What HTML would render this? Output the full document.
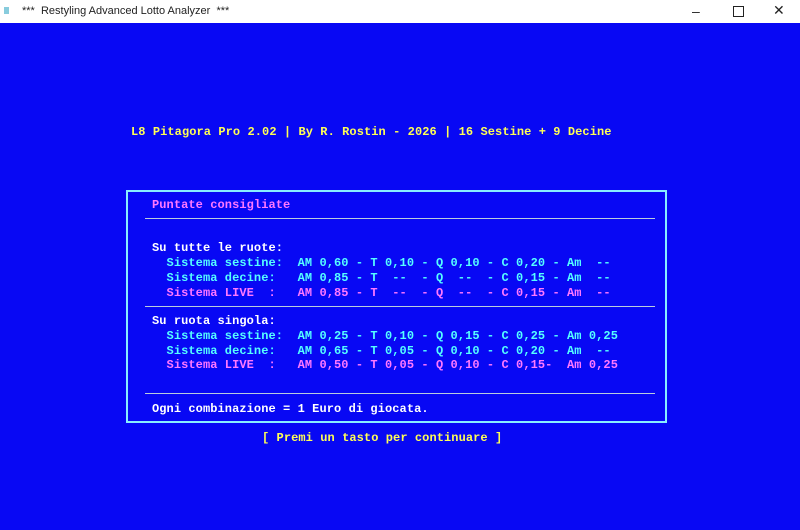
<!DOCTYPE html>
<html><head><meta charset="utf-8"><style>
body{margin:0;width:800px;height:530px;overflow:hidden;background:#0808f4;font-family:"Liberation Mono",monospace;}
.tb{position:absolute;left:0;top:0;width:800px;height:23px;background:#fff;font-family:"Liberation Sans",sans-serif;font-size:11px;color:#222;}
.t{position:absolute;font-size:12px;font-weight:bold;white-space:pre;line-height:14px;letter-spacing:0.08px;}
.w{color:#fff}.c{color:#5ff}.p{color:#ff78ff}.y{color:#ffff55}
.box{position:absolute;left:126px;top:190px;width:537px;height:229px;border:2px solid #8ef;}
.hl{position:absolute;left:145px;width:510px;height:1px;background:#bcd;}
</style></head><body>
<div class="tb"><span style="position:absolute;left:4px;top:7px;width:5px;height:7px;background:#8cd"></span><span style="position:absolute;left:22px;top:5px">***&nbsp;&nbsp;Restyling Advanced Lotto Analyzer&nbsp;&nbsp;***</span>
<span style="position:absolute;left:692px;top:3px;font-size:14px">&#8211;</span>
<span style="position:absolute;left:733px;top:6px;width:9px;height:9px;border:1px solid #222"></span>
<span style="position:absolute;left:773px;top:2px;font-size:14px">&#10005;</span></div>
<div class="t y" style="left:131px;top:125px">L8 Pitagora Pro 2.02 | By R. Rostin - 2026 | 16 Sestine + 9 Decine</div>
<div class="box"></div>
<div class="hl" style="top:218px"></div>
<div class="hl" style="top:306px"></div>
<div class="hl" style="top:393px"></div>
<div class="t p" style="left:152px;top:198px">Puntate consigliate</div>
<div class="t w" style="left:152px;top:241px">Su tutte le ruote:</div>
<div class="t c" style="left:152px;top:256px">  Sistema sestine:  AM 0,60 - T 0,10 - Q 0,10 - C 0,20 - Am  --</div>
<div class="t c" style="left:152px;top:271px">  Sistema decine:   AM 0,85 - T  --  - Q  --  - C 0,15 - Am  --</div>
<div class="t p" style="left:152px;top:286px">  Sistema LIVE  :   AM 0,85 - T  --  - Q  --  - C 0,15 - Am  --</div>
<div class="t w" style="left:152px;top:314px">Su ruota singola:</div>
<div class="t c" style="left:152px;top:329px">  Sistema sestine:  AM 0,25 - T 0,10 - Q 0,15 - C 0,25 - Am 0,25</div>
<div class="t c" style="left:152px;top:344px">  Sistema decine:   AM 0,65 - T 0,05 - Q 0,10 - C 0,20 - Am  --</div>
<div class="t p" style="left:152px;top:358px">  Sistema LIVE  :   AM 0,50 - T 0,05 - Q 0,10 - C 0,15-  Am 0,25</div>
<div class="t w" style="left:152px;top:402px">Ogni combinazione = 1 Euro di giocata.</div>
<div class="t y" style="left:262px;top:431px">[ Premi un tasto per continuare ]</div>
</body></html>
